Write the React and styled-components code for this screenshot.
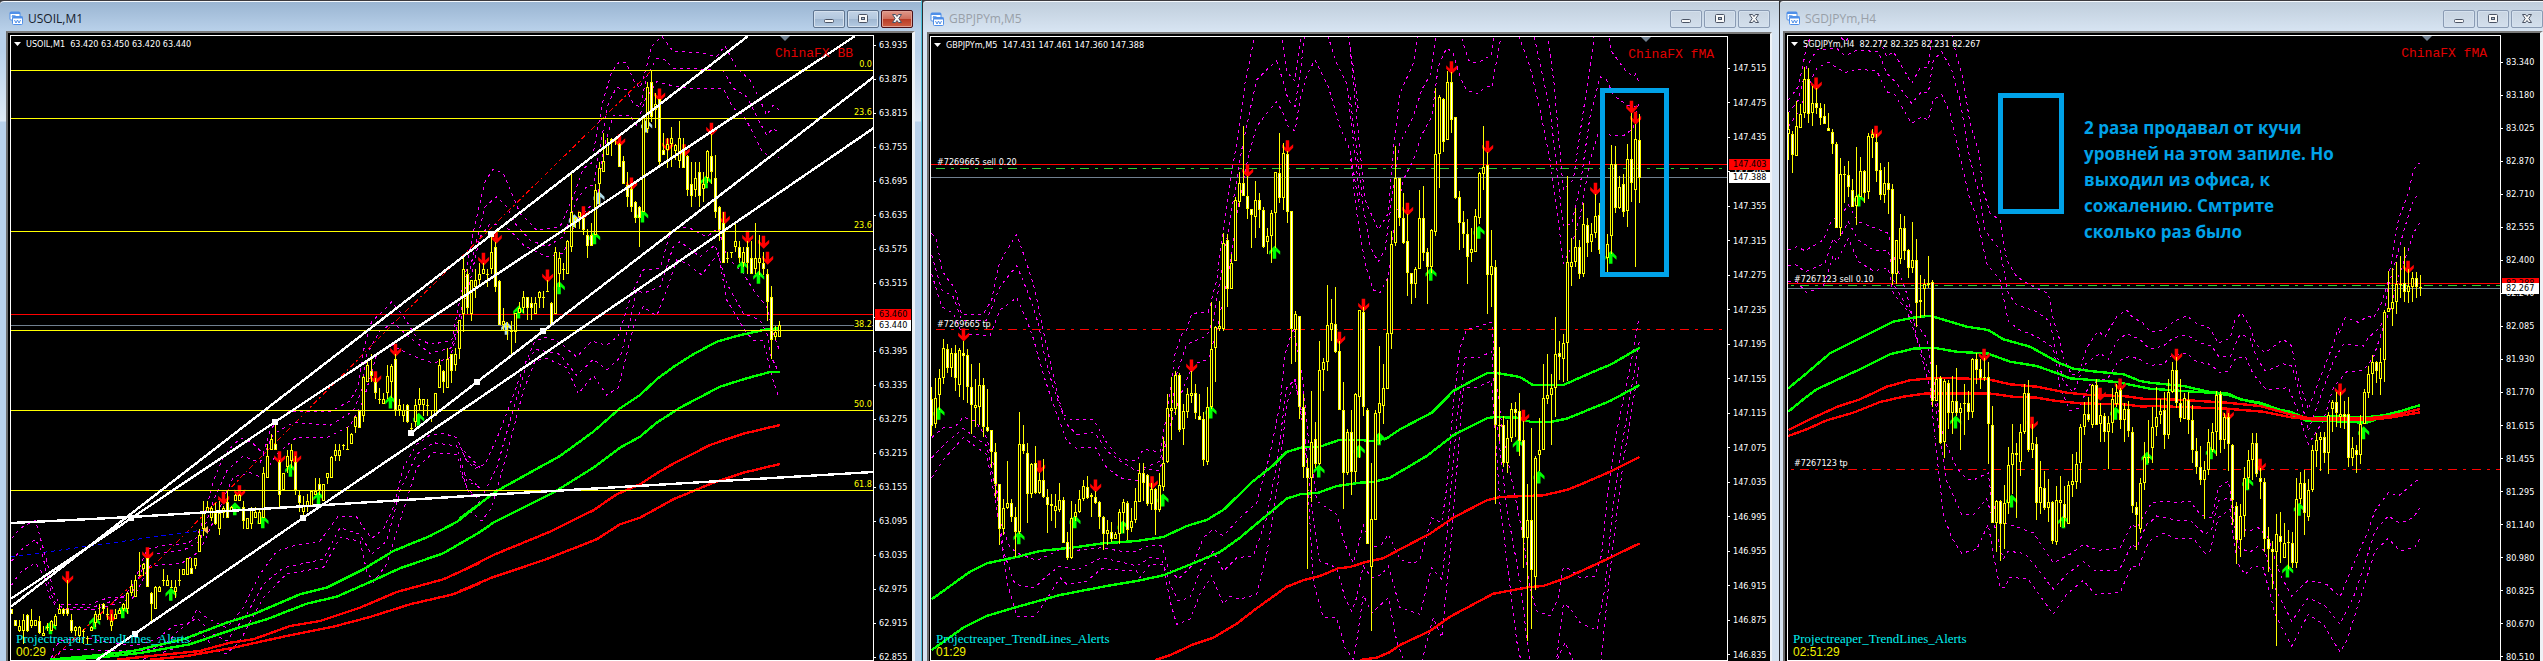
import React from "react";
import styled, { createGlobalStyle, css } from "styled-components";

const GlobalStyle = createGlobalStyle`
  * { box-sizing: border-box; }
  html, body { margin: 0; padding: 0; background: #3a3a3c; }
`;

const small = css`
  font-family: "DejaVu Sans Condensed", "DejaVu Sans", "Open Sans", sans-serif;
  font-size: 9px;
`;

const Desktop = styled.main`
  display: grid;
  grid-template-columns: 922fr 857fr 764fr;
  height: 100vh;
  overflow: hidden;
`;

const Window = styled.section`
  min-width: 0;
  min-height: 0;
  display: flex;
  flex-direction: column;
  border-top: 1px solid #3c3a3e;
  border-left: ${(p) => (p.$active ? "0" : "1px solid #2d2d31")};
  border-right: ${(p) => (p.$active ? "1px solid #4cc3dc" : "0")};
  border-top-left-radius: 4px;
  padding: 0 ${(p) => p.$right}px 0 ${(p) => p.$left}px;
  background: ${(p) =>
    p.$active
      ? "linear-gradient(#99b4d1 0, #b9d1ea 30px, #b9d1ea 50px, #dfeaf6 120px, #b9d1ea 121px)"
      : "linear-gradient(#bfcddb 0, #d7e4f2 30px)"};
  box-shadow: inset 0 1px 0 #f4f8fc;
`;

const TitleBar = styled.header`
  height: ${(p) => p.$height}px;
  flex: none;
  display: flex;
  align-items: center;
  gap: 4px;
  padding: 5px 0 0 3px;
`;

const Title = styled.h2`
  flex: 1;
  margin: 0;
  font: 400 12px/18px "Open Sans", "Noto Sans", sans-serif;
  color: ${(p) => (p.$active ? "#15202c" : "#99a0a8")};
`;

const Controls = styled.div`
  display: flex;
  gap: 2px;
  margin-right: ${(p) => p.$inset}px;
`;

const ControlButton = styled.button`
  width: 32px;
  height: 18px;
  padding: 0;
  display: grid;
  place-items: center;
  border: 1px solid ${(p) => (p.$danger ? "#4b1017" : p.$active ? "#5f7590" : "#8a9bb3")};
  border-radius: 2px;
  box-shadow: inset 0 0 0 1px ${(p) => (p.$danger ? "#e0a195" : "#d5e1ee")};
  background: ${(p) =>
    p.$danger
      ? "linear-gradient(#e0988a 0, #cf6f5d 48%, #b83a25 50%, #cd6045 100%)"
      : p.$active
        ? "linear-gradient(#c2d3e6 0, #b4c8de 48%, #9fb6d0 50%, #b5cce4 100%)"
        : "linear-gradient(#c8d4e1, #d3dfec)"};
`;

const Client = styled.div`
  flex: 1;
  min-height: 0;
  display: flex;
  background: #000;
  border-top: 2px solid #7a7a7a;
  border-left: 2px solid #6c6c6c;
  border-right: ${(p) => p.$edge}px solid #eef2f6;
  padding: 2px 0 0 ${(p) => p.$pad}px;
`;

const Plot = styled.div`
  position: relative;
  flex: 1;
  min-width: 0;
  border: 1px solid #fff;
  overflow: hidden;
`;

const Canvas = styled.svg`
  display: block;
  width: 100%;
  height: 100%;
`;

const Quote = styled.div`
  ${small}
  position: absolute;
  left: 3px;
  top: 2px;
  display: flex;
  align-items: center;
  gap: 5px;
  color: #fff;
  line-height: 12px;
  white-space: pre;
`;

const Indicator = styled.div`
  position: absolute;
  right: ${(p) => p.$right}px;
  top: 10px;
  font: 13px/16px "Liberation Mono", monospace;
  color: #e00000;
  white-space: pre;
`;

const Footer = styled.div`
  position: absolute;
  left: 5px;
  bottom: 2px;
  font: 13px/14px "Liberation Serif", serif;
  color: #00f0f0;
`;

const Countdown = styled.div`
  font: 12px/12px "Liberation Sans", sans-serif;
  color: #f0f000;
`;

const LineLabel = styled.div`
  ${small}
  position: absolute;
  top: ${(p) => p.$top}px;
  left: 6px;
  line-height: 12px;
  color: #fff;
`;

const FibLabel = styled.div`
  ${small}
  position: absolute;
  top: ${(p) => p.$top}px;
  right: 1px;
  line-height: 12px;
  background: #000;
  color: #ff0;
`;

const Axis = styled.div`
  position: relative;
  flex: none;
  width: ${(p) => p.$width}px;
  overflow: hidden;
`;

const Scale = styled.ol`
  ${small}
  list-style: none;
  margin: 0;
  padding: ${(p) => p.$top}px 0 ${(p) => p.$bottom}px;
  height: 100%;
  display: flex;
  flex-direction: column;
  justify-content: space-between;
  color: #fff;
`;

const Tick = styled.li`
  display: flex;
  align-items: center;
  gap: 3px;
  height: 8px;
  line-height: 8px;
  &::before {
    content: "";
    width: 2px;
    height: 1px;
    background: #fff;
  }
`;

const PriceTag = styled.div`
  ${small}
  position: absolute;
  top: ${(p) => p.$top}px;
  left: 1px;
  right: ${(p) => p.$right}px;
  height: 11px;
  line-height: 11px;
  padding-left: 4px;
  color: #000;
  background: ${(p) => p.$tone};
`;

const Note = styled.p`
  position: absolute;
  left: 296px;
  top: 79px;
  width: 270px;
  margin: 0;
  font: 700 17px/26px "Open Sans", "Noto Sans", sans-serif;
  color: #00a2e8;
  white-space: pre-line;
`;

/* Series are kept in thirds of a pixel; "@x,y" moves the origin (in pixels). */
function walk(text, visit) {
  let ox = 0;
  let oy = 0;
  text.trim().split(/\s+/).forEach((token) => {
    if (token[0] === "@") [ox, oy] = token.slice(1).split(",").map(Number);
    else visit(token, ox, oy);
  });
}

function points(text) {
  const out = [];
  walk(text, (t, ox, oy) => {
    const [x, y] = t.split(",").map(Number);
    out.push([ox + x / 3, oy + y / 3]);
  });
  return out;
}

const toLine = (text) => points(text).map((p) => p.map((v) => v.toFixed(1)).join(",")).join(" ");

/* Each run: origin, first x, then high,top,bottom,low per bar; "*" is a falling bar. */
function Candles({ runs }) {
  const wicks = [];
  const rims = [];
  const fills = [];
  runs.forEach(([ox, oy, start, text]) => {
    text.trim().split(/\s+/).forEach((token, i) => {
      if (token === "-") return;
      const x = ox + Math.floor((start + i * 12) / 3);
      const down = token.endsWith("*");
      const v = token.replace("*", "").split(",").map((n) => oy + Math.round(Number(n) / 3));
      const [h, t, b] = v;
      const l = v.length > 3 ? v[3] : b;
      const bh = Math.max(1, b - t);
      wicks.push(`M${x} ${h}h1V${Math.max(l, h + 1)}h-1z`);
      rims.push(`M${x - 1} ${t}h3v${bh}h-3z`);
      if (bh > 2) fills.push([`M${x} ${t + 1}h1v${bh - 2}h-1z`, down]);
    });
  });
  return (
    <g>
      <path d={wicks.join("") + rims.join("")} fill="#ff0" />
      <path d={fills.filter((f) => !f[1]).map((f) => f[0]).join("")} fill="#000" />
      <path d={fills.filter((f) => f[1]).map((f) => f[0]).join("")} fill="#fff" />
    </g>
  );
}

const ARROW = "M-2-6.5h3.5v7.5l4-3.5v3.5l-5.5 5.5l-5.5-5.5v-3.5l3.5 3.5z";

function Arrows({ at, color, up }) {
  return points(at).map(([x, y], i) => (
    <path key={i} d={ARROW} fill={color} transform={`translate(${x.toFixed(1)} ${y.toFixed(1)})${up ? " scale(1 -1)" : ""}`} />
  ));
}

const Bands = ({ list }) =>
  list.map((s, i) => (
    <polyline key={i} points={toLine(s)} fill="none" stroke="#f0f" strokeDasharray="3 4" shapeRendering="crispEdges" />
  ));

const Averages = ({ list }) =>
  list.map(([color, s], i) => (
    <polyline key={i} points={toLine(s)} fill="none" stroke={color} strokeWidth="2.4" shapeRendering="crispEdges" />
  ));

const Level = ({ y, color, dash }) => (
  <path d={`M0 ${y}.5H2543`} stroke={color} strokeDasharray={dash ? "9 6 3 6" : undefined} shapeRendering="crispEdges" />
);

const ShiftMark = ({ x, y }) => <path d={`M${x - 5} ${y}h10l-5 5z`} fill="#708090" />;

const OIL = {
  candles: [
    [0, 321, 35, `865,865,880* 898,898,915* 898,915,930,932 880,898,930,970 880,882,930,932* 865,898,915,920 898,898,915
      885,900,935,940* 915,935,945 905,918,920,930 898,900,930 880,885,915 848,865,880 860,865,880,885* 778,865,880,885*
      878,898,930,935* 915,918,930,945 915,918,945,965 925,930,932,968 945,950,952,970 915,918,930 870,878,905,918 850,880,898
      845,848,865,880* 860,880,882,898 880,900,915,930 865,880,895 860,868,880 845,850,865,870 813,815,863,880 778,795,815,825
      762,778,828 693,763,765 725,728,745,765 710,712,797* 813,815,848,905* 795,797,865 795,797,813 745,778,780,795
      762,778,795 778,798,800 778,797,813,830 745,778,780,795 745,745,762 710,712,762 710,740,758* 710,712,735,745
      625,643,693 540,575,625,645 540,557,573 555,560,592,600 545,575,610,612* 540,575,625,643 555,560,575,592
      510,543,590,592* 555,558,573 520,523,541 520,523,541 540,558,600,625* 590,592,625 558,560,608,625 558,573,590
      560,573,608 438,457,590 370,405,472 338,353,388 305,370,388* 418,422,522,557* 457,457,507 388,405,438,457
      370,388,420,440 405,422,507,522* 507,523,545,573* 525,555,573,590 520,541,557,573 508,510,558 472,510,523
      472,490,508,522* 488,490,541 455,457,472,490 405,407,472 368,388,405,420 370,388,405,420 370,372,374,388
      318,385,388 335,338,370 285,287,318,335 268,270,320* 165,167,285,302 115,133,183 98,150,165,183* 170,183,217,235*
      200,235,237,250 215,235,250 133,165,217,235 130,135,183,230 98,115,268,285* 235,252,268,285 250,268,285,302
      250,252,302,305* 305,320,322,335 235,252,302,318 200,235,252,270 235,235,252,285 235,252,254,285 270,285,287,302
      217,217,285 115,133,200 148,150,183,217* 82,115,202 98,100,150,185* 82,98,133,150 -3,-3,83,115`],
    [460, 0, 11, `773,808,943,995 808,823,925,943* 840,840,943,962 808,840,860,895 790,823,840,860 790,808,823
      808,823,825,860 700,757,808,823 725,740,860,875* 840,842,975* 925,962,975,992 965,978,980,1020 962,992,994,1063
      940,940,995,1030 905,925,940 873,890,925,940 890,892,925,960* 890,908,925,960* 890,908,943 873,875,895,925
      873,890,892,925 840,873,875 905,908,975* 740,757,943 757,773,823,860 790,808,810,840 720,722,823 518,637,740,757
      650,655,657,685 635,637,650,688 650,655,690,705* 688,705,738,773* 670,705,738* 552,570,705 485,503,552,620
      400,483,517 415,433,465 413,417,430,467 415,417,419,435 430,433,500* 467,483,553* 517,555,590,620* 550,568,620,637*
      603,605,655,670* 618,620,655,740* 345,350,637 245,262,388,400 210,247,350,365* 280,313,330,385 297,297,487,503*
      400,450,465* 415,433,450,503 380,415,433,500 433,436,452,480 362,415,483,503 415,450,503* 465,467,570,587*
      485,552,587,620* 485,535,570,590 487,517,587,620* 517,552,568,605 450,452,535,550 403,467,517,552* 465,535,637,655*
      618,620,690,722* 637,670,790* 757,773,775,790 757,757,759,775 670,722,740,755 722,740,773,790* 740,755,790,800
      722,740,790,823* 722,773,823* 670,773,808,823 705,773,790,825 757,790,808,825* 808,823,905,962* 857,890,1020,1078*
      978,995,1012,1020 962,975,1012`],
  ],
  bands: [
    `@0,321 35,652 60,622 106,598 118,640 132,690 148,750 158,810 180,850 270,850 330,828 370,828 400,790 440,685 500,672 560,668
     590,650 612,590 640,480 670,410 700,370 725,352 760,368 790,398 810,330 830,300 870,270 990,272 1050,240 1075,195 1090,90
     1115,0 1140,-20 1175,-58 1210,-15 1250,50 1290,70 1355,60 1375,-40 @460,0 15,830 35,720 55,630 75,545 100,507 130,520 155,580
     180,640 230,690 300,680 340,590 370,505 395,490 410,400 430,300 455,215 480,183 500,190 520,240 540,265 560,200 575,140
     605,108 640,155 720,157 770,170 795,137 830,205 870,240 900,300 920,345 940,315 957,330`,
    `@0,321 35,720 60,690 106,655 125,690 145,780 160,840 190,862 280,858 345,838 400,810 445,700 550,688 600,660 640,540 680,450
     730,405 780,425 820,340 880,305 990,313 1060,270 1085,210 1100,100 1140,30 1180,5 1230,50 1290,97 1355,80 1385,-40
     @460,0 25,830 50,720 75,620 110,590 140,620 165,670 210,720 260,740 310,710 350,600 380,560 400,555 420,440 445,310 470,262
     500,270 520,310 540,322 560,230 590,175 615,180 640,205 720,207 790,212 820,265 860,290 890,350 920,405 940,385 957,400`,
    `@0,321 35,792 60,755 106,725 130,760 150,830 175,865 280,865 345,850 400,830 450,735 545,727 600,690 650,580 700,468 750,455
     785,470 830,400 890,348 985,348 1050,315 1090,240 1130,100 1170,70 1240,105 1300,127 1350,110 1385,-10
     @460,0 10,930 40,800 60,710 90,672 120,675 150,690 190,735 260,770 310,760 350,660 390,620 410,610 430,450 460,345 510,345
     530,375 555,300 590,245 640,258 700,266 790,267 820,325 850,345 880,400 910,460 957,472`,
    `@0,321 155,1012 160,985 180,960 260,950 330,965 400,975 470,955 520,915 570,905 590,865 620,890 680,920 730,860 780,760
     830,690 880,675 960,660 1015,585 1070,588 1090,620 1115,652 1150,625 1180,560 1210,440 1250,370 1290,342 1330,337 1370,350
     1400,420 1440,440 @460,321 0,378 20,420 45,442 75,430 120,330 150,250 190,140 225,60 260,48 300,65 350,108 395,60 440,73
     475,45 @460,0 515,880 550,810 600,805 630,700 655,678 690,685 740,710 775,685 800,770 850,820 880,870 920,920 940,1000
     @460,321 957,85`,
    `@0,321 158,1015 190,985 430,990 490,975 540,925 590,890 640,940 680,960 740,880 790,790 850,740 970,715 1020,620 1080,640
     1115,700 1160,660 1200,510 1250,400 1300,365 1370,375 1400,480 1440,500 @460,321 0,450 30,520 70,520 110,440 150,300 200,130
     225,85 300,100 350,163 400,115 440,147 480,110 510,0 @460,0 530,870 550,880 600,860 640,740 660,725 720,770 765,735 800,850
     850,940 900,960 925,1010 @460,321 930,100 957,155`,
    `@0,321 430,1015 560,970 600,930 650,990 680,998 720,960 790,830 860,758 970,740 1020,650 1080,660 1100,750 1120,783 1160,730
     1200,600 1250,440 1300,395 1370,400 1400,500 1440,540 @460,321 30,570 65,600 95,560 140,400 190,210 225,120 260,112 320,140
     355,218 400,163 440,222 475,200 505,80 525,0 @460,0 550,920 590,948 620,870 650,780 680,790 725,825 775,760 800,900 860,1000
     880,1020 @460,321 910,60 940,180 957,230`,
  ],
  averages: [
    ["#0f0", `@0,321 150,1016 290,1003 400,990 550,955 680,905 760,880 900,820 980,800 1090,745 1180,690 1290,645 1370,603 1440,548
      @460,321 0,592 110,510 300,405 400,332 480,262 540,222 590,175 640,138 700,100 770,62 830,45 920,25 955,22`],
    ["#0f0", `@0,321 150,1018 290,1010 420,996 570,970 700,925 800,895 920,848 1010,827 1110,783 1200,742 1330,697 1440,633
      @460,321 100,605 280,515 400,440 480,380 540,347 590,305 660,260 780,197 860,172 930,153 960,153`],
    ["#f00", `@0,321 350,1016 500,1000 600,990 690,965 760,955 870,915 960,900 1080,860 1190,813 1330,775 1440,725
      @460,321 0,752 100,702 270,632 400,568 470,520 540,490 590,457 640,428 750,372 850,338 960,312`],
    ["#f00", `@0,321 450,1016 560,1005 700,980 850,947 1000,917 1110,888 1230,850 1360,820 1440,787
      @460,321 0,810 100,768 250,718 410,655 480,610 540,590 640,535 760,485 850,455 960,429`],
  ],
  sells: `@0,321 203,770 335,885 443,698 671,532 719,512 839,410 887,410 1127,170 1187,88 @460,0 71,778 109,712 263,828 371,638
    479,422 515,552 599,285 623,435 673,452 755,388 793,655 863,712 911,727 923,775`,
  buys: `@0,321 152,920 284,905 369,872 513,820 705,563 789,602 872,448 956,532 1172,243 1256,295 @460,0 176,936 298,863 404,713
    548,648 739,545 848,800 896,832`,
  hints: `@460,0 140,985 343,662 417,593 560,378`,
  handles: `@0,321 825,303 393,592 909,591 1233,336 1431,183 404,938 @460,0 92,703 249,992`,
  trends: [
    `@0,321 33,857 @460,0 864,108`,
    `@0,321 33,833 825,303 @460,0 1185,108`,
    `@0,321 290,1017 909,591 1440,230 @460,0 1240,385`,
    `@0,321 1233,336 1431,183 @460,0 1240,232`,
    `@0,321 33,606 393,588 1440,523 @460,321 1240,453`,
  ],
};

const GBP = {
  candles: [
    [920, 321, 35, `198,235,315,345* 172,230,310,322 145,172,222,268 53,80,172,188 70,83,140,155* 80,97,140,168 73,97,170,210*
      80,87,193,228 60,97,104,237* 83,102,198,247* 128,198,252,338* 175,253,260,318 125,193,257,311 170,193,317,347*
      204,317,330,333* 328,328,393,440* 367,393,490,530* 488,490,625,672* 533,560,625,643 420,545,560,565 533,545,588,603*
      558,588,632,707* 273,370,632,640 311,370,390,400* 367,397,520,605* 425,428,520,530 375,427,517,520* 455,478,517,520
      415,478,527,530* 503,527,553,635* 518,548,556,600 518,555,570,620 485,538,568,573 528,538,665* 632,663,712,718*
      540,592,712,714 550,572,588,600 507,535,572,575 478,495,535,540 465,497,530,535* 515,523,528,588 510,528,545,550*
      541,543,588,625* 585,588,640,687* 598,628,640,672 603,632,655,663* 633,638,655 565,572,640,670 533,543,577,635
      541,545,628,657* 560,600,622,633 500,541,598,605 425,455,543 427,455,485,540* 460,463,548,556* 485,503,550,568
      500,503,567,642* 455,492,568,572 348,425,497,510 218,262,422,425 168,262,270,357 150,163,263,283 155,163,328,332*
      250,270,325,373 202,220,272,290 150,215,225,247 190,217,277,293* 218,285,298* 273,293,416,435* 198,257,422,433
      -58,83,257,263 15,17,82,182 -60,15,25,30 -263,-235,25,30 -260,-243,-95,-43* -200,-173,-95 -372,-363,-180
      -448,-413,-358,-343 -585,-413,-375* -435,-375,-337,-307* -337,-337,-317,-218* -420,-363,-313,-250
      -385,-363,-333,-280* -342,-333,-223,-218* -278,-255,-237,-202 -333,-325,-255,-175 -448,-446,-325,-220
      -563,-443,-370,-355* -535,-503,-370,-333 -510,-501,-328,-295* -330,-330,25,130* -30,-20,28,122 -15,-15,257,293*
      218,257,437,470* 412,440,470,743* 210,362,470,543 303,353,428,440* 60,148,428,432 112,122,148,210 -108,12,122,150
      -67,5,28,60 -103,10,92,95* 60,90,268* 183,268,455,565* 325,333,457,462 268,333,452,522* 217,220,452,483`],
    [1350, 321, 29, `-33,-33,227,412 -43,-28,258,285* 262,268,670* 425,595,737,930 268,277,598 75,247,275,370 128,202,255,308
      -125,37,205 -270,-230,40,83 -525,-430,-233,-225 -430,-428,-310,-285* -385,-308,-235,-232* -320,-240,-143,-75*
      -145,-143,-112,-50* -163,-155,-110,-70 -393,-308,-155 -405,-310,-205,-180* -220,-207,-163,-50* -275,-273,-163,-145
      -698,-500,-268,-255 -678,-672,-500,-398 -668,-665,-537,-508* -750,-717,-542 -748,-717,-603,-565* -612,-611,-370,-365*
      -390,-372,-293,-213* -330,-297,-260,-220* -305,-260,-193,-110* -280,-217,-203,-177 -335,-315,-208 -447,-445,-310,-290
      -585,-462,-440,-393 -507,-468,-137,-20* -272,-165,-137,-43 -183,-162,313,550* 78,313,315,360 285,313,425,437*
      298,352,425,455 247,265,352,363 243,265,275,347* 217,270,360,405* 300,358,650,742* 490,597,652,960 320,597,748,923*
      405,410,767,806 290,388,403,450 130,230,388 98,223,233,250 158,200,223,372 -13,98,200,287 60,95,108,177*
      40,65,115,182 -435,-178,65,180 -248,-178,-163,-105 -340,-222,-177,-163 -243,-223,-140,-125* -353,-290,-140,-133
      -310,-287,-235,-193* -295,-260,-237,-208 -380,-315,-265,-248 -353,-317,-212,-200* - -260,-230,-190,-148
      -527,-470,-255,-200 -525,-470,-340,-325* -435,-403,-338,-337 -440,-410,-327,-313* -530,-485,-330,-282
      -625,-487,-415,-358* -590,-545,-392,-163 -620,-542,-430,-355*`],
  ],
  bands: [
    `@920,0 35,700 50,720 65,810 85,840 105,865 125,945 190,942 215,900 235,800 255,760 290,703 320,790 345,870 365,970
     @920,321 390,120 415,230 430,280 455,297 520,295 560,365 600,415 650,420 670,385 720,393 740,280 765,100 785,40
     @920,0 800,990 815,940 865,937 890,840 915,650 935,520 960,370 975,250 1003,115 1006,90 1082,90 1100,215 1125,243 1145,90
     1282,90 1300,200 1315,330`,
    `@1350,0 0,140 25,400 45,600 85,690 115,640 130,450 150,280 190,190 207,90 590,90 612,250 640,570 670,540 690,400 720,200
     735,90 772,90 785,155 825,210 850,230 857,222 868,250`,
    `@920,0 35,765 65,870 100,890 125,960 200,960 240,860 290,797 325,880 355,970 @920,321 375,110 400,200 440,310 470,340
     525,335 560,390 600,420 650,450 720,420 740,340 770,160 800,70 860,45 @920,0 880,960 915,750 940,600 965,450 990,330
     1010,240 1050,200 1070,183 1085,230 1105,300 1125,320 1140,220 1157,90 1218,90 1250,190 1280,250 1300,420 1320,600`,
    `@1350,0 0,290 20,450 40,620 60,740 85,785 105,750 125,600 150,430 190,350 215,270 240,225 262,90 328,90 355,180 380,190
     425,165 434,90 548,90 600,330 620,500 640,680 665,670 690,560 720,350 750,230 770,240 790,285 830,315 868,320`,
    `@920,0 35,822 65,920 100,940 125,1000 210,1008 240,930 290,893 320,960 340,1015 @920,321 370,160 400,250 440,360 470,382
     525,377 560,440 600,470 650,480 670,445 720,448 745,330 790,200 820,130 865,115 @920,0 890,990 925,820 955,620 985,470
     1010,380 1040,340 1070,305 1090,340 1105,380 1125,393 1140,300 1160,225 1185,180 1225,260 1260,380 1290,450 1318,620`,
    `@1350,0 0,455 20,640 45,790 70,870 90,878 115,830 135,660 160,540 190,480 215,405 245,350 265,200 290,143 310,160 330,230
     350,270 380,282 410,258 425,262 440,180 457,90 500,90 540,200 570,330 600,480 620,620 640,790 660,750 690,650 720,480
     745,400 780,405 820,408 850,385 868,300`,
    `@920,321 35,350 70,320 105,318 130,288 165,300 200,350 225,450 240,600 270,680 300,700 350,718 380,705 430,680 470,688
     545,680 600,690 650,690 690,672 725,675 745,740 775,775 820,730 850,650 880,625 910,645 960,590 1010,545 1050,400 1080,250
     1095,100 1120,20 1145,150 1165,350 1190,540 1250,580 1275,670 1300,725 @1350,321 20,690 40,612 65,680 95,670 115,640
     150,715 190,728 210,715 245,590 275,605 290,500 310,250 330,80 350,25 390,15 425,3 435,150 460,350 490,500 520,650 540,800
     560,870 600,885 625,830 640,740 660,745 690,770 735,765 755,700 775,500 800,330 830,190 855,60 865,0`,
    `@920,321 35,410 75,368 130,322 200,375 230,520 250,690 285,790 345,800 380,765 420,735 470,748 545,710 610,725 650,735
     690,710 725,715 750,790 775,840 810,830 840,750 880,690 910,750 950,710 1000,705 1040,590 1070,430 1100,200 1125,175
     1150,300 1180,600 1200,720 1250,740 1275,830 1295,870 @1350,321 20,830 40,735 65,770 95,760 115,735 150,860 210,880
     245,740 275,775 290,650 320,300 345,110 390,108 425,92 440,300 470,560 510,780 540,1030 618,1030 640,850 660,860 690,905
     740,928 765,800 790,550 820,350 868,60`,
    `@920,321 35,470 75,410 130,350 200,400 230,560 260,780 290,885 345,885 380,835 420,770 440,790 500,780 545,743 650,750
     660,770 690,730 730,730 750,840 770,910 810,895 840,820 875,765 910,850 930,825 960,835 1010,820 1040,700 1075,480
     1100,250 1125,175 1155,350 1180,780 1210,890 1250,890 1275,980 1300,1015 @1350,321 20,960 40,822 65,875 115,830 140,960
     165,1030 213,1030 250,890 275,950 300,700 340,200 380,198 425,180 450,550 500,960 515,1030 615,1030 645,965 675,1030
     752,1030 780,750 820,420 868,130`,
  ],
  averages: [
    ["#0f0", `@920,321 35,835 100,788 150,752 200,727 290,708 360,690 470,678 550,667 650,660 730,648 800,615 860,597 910,567
      1000,480 1060,433 1100,393 1150,378 1200,377 1255,358 1320,357 @1350,321 70,360 110,352 150,325 245,275 310,210 380,172
      415,155 435,155 510,168 550,193 640,192 740,148 780,132 869,80`],
    ["#0f0", `@920,321 35,987 130,920 200,885 290,858 420,822 560,795 650,780 730,763 820,727 900,693 960,650 1040,583 1100,533
      1140,520 1195,515 1250,495 1320,485 @1350,321 70,483 120,470 230,405 310,343 410,292 435,288 500,290 540,302 600,303
      650,293 780,240 869,192`],
    ["#f00", `@920,321 705,1017 750,1003 820,970 880,950 950,908 1010,862 1100,797 1150,778 1200,765 1255,742 1290,738
      @1350,321 50,722 100,712 150,685 240,638 310,590 410,538 450,528 580,523 650,507 700,487 780,452 869,408`],
    ["#f00", `@1350,321 30,1017 80,1010 120,993 150,972 240,930 300,887 430,818 540,798 580,795 650,770 770,715 869,667`],
  ],
  sells: `@920,321 131,42 359,438 527,495 697,485 815,135 1259,52 @920,0 983,513 1103,440 @1350,0 41,916 173,628 305,203 413,442
    737,568 845,322 857,355 @1350,321 521,286`,
  buys: `@920,321 57,277 297,650 465,602 609,618 729,537 873,273 1197,450 1318,390 @920,0 1064,757 @1350,0 243,823 387,697
    783,772 @1350,321 88,353 505,373 567,468`,
};

const SGD = {
  candles: [
    [1770, 321, 55, `-628,-575,-560,-483 -570,-562,-497,-445* -660,-585,-495 -650,-622,-580 -762,-725,-625,-608
      -758,-725,-622,-593* -705,-655,-623,-585 -700,-655,-638,-620* -653,-638,-610,-587* -650,-615,-590* -623,-580,-570*
      -577,-568,-530,-502* -537,-530,-280* -490,-440,-280,-255 -465,-442,-437,-355 -480,-437,-403,-373* -425,-392,-343*
      -522,-375,-345,-288 -492,-450,-373 -453,-451,-385,-355* -563,-555,-387,-365 -575,-560,-550,-490 -560,-537,-450,-418*
      -473,-452,-378,-363* -462,-413,-378,-355 -478,-413,-393,-320* -410,-395,-140,-107* -243,-242,-140,-110
      -320,-278,-187,-172 -315,-278,-210,-182* -217,-213,-160,-130* -297,-183,-160,-145 -245,-183,-55,18* -137,-63,-58,-8
      -127,-112,-95,-15 -195,-113,-108,-100 -122,-117,240,257* 133,175,240 165,172,365,370* 175,180,363,410
      178,185,277,325* 165,240,277,338 142,240,277,285* 245,260,275,388 190,245,250,343 210,247,272,297* 112,115,273,292
      97,115,147,190* 115,145,170,205* 112,167,172,180 123,167,310,428* 255,312,607* 538,540,607,692 538,540,610,720*
      492,545,610,685 378,433,545,580 310,395,433,520 367,397,402,590* 310,332,422,465 190,217,332,340 178,217,387,392*
      310,367,387,410 347,368,547,598* 420,497,547,580 450,500,562,567* 475,542,562,602 541,542,660,668* 495,538,663,672
      465,538,545,617 495,548,590,617* 480,493,610 400,480,492,527 392,428,482,503 308,317,425,487 243,280,317,342
      228,280,298,302* 188,193,313,320 175,193,311* 245,283,310,362 275,286,333,362* 285,307,333,443 202,235,307,337
      190,212,250,258 202,208,297,325* 245,265,298,362 240,265,330,347* 318,333,555,575* 543,558,583,687* 470,485,625,635
      363,408,485,508 298,408,412,425 258,317,382,425`],
    [2150, 321, 19, `198,287,317,345 235,270,283,310 213,268,343,383* 173,212,343,355 123,148,212,217 108,148,247,260*
      173,247,292,302* 215,230,293 212,238,297,340* 252,297,387,425* 352,390,438,460* 375,438,478,492* 420,448,478,593
      325,363,448,463 305,332,388,392 210,223,332,405 210,220,357,395* 275,288,357,385 275,288,370,450* 370,373,538,613*
      543,555,658,730* 548,586,658,707 438,470,586,648 388,417,470,505 335,365,417,478 335,365,460,467* 440,472,482,533*
      470,482,653,693* 617,653,685,753* 660,685,692,805* 580,640,692,975 573,645,662,725* 605,665,710 628,663,665,745
      632,665,725,740* 470,535,725,740 453,487,535,548 447,487,577,642* 475,508,587,600 372,388,508,513 335,358,390,438
      333,348,358,450 333,348,395,425* 273,283,395,458 237,243,265,333 212,243,277,317* 213,280,287,322 240,280,287,325*
      227,280,412,437* 347,380,412,435 372,388,403,455* 282,310,403,428 203,213,310 135,160,215,230 102,123,160,222
      120,123,150,187* 80,122,175,223 -33,-28,118,182 -150,-38,-28 -160,-57,-37,15 -177,-110,-57,-20 -195,-110,-108,-68
      -222,-115,-88,-57* -155,-105,-88,-53 -148,-130,-103,-57 -148,-130,-103,-70* -138,-102,-98,-75`],
  ],
  bands: [
    `@1770,0 55,300 85,260 100,190 110,135 122,112 140,90 190,90 225,125 240,108 280,90 320,100 350,170 370,155 425,250 450,205
     475,200 490,90 543,90 560,170 580,240 600,370 625,450 640,570 660,640 690,660 710,780 740,830 790,860 835,880 850,960
     868,1015 @1770,321 880,110 905,162 925,160 950,80 985,30 1005,48 1020,20 @1770,0 1040,950 1070,930 1090,955 1115,965
     1140,995 @2150,0 0,995 40,990 75,962 110,948 140,970 180,985 205,1030 240,1015 255,960 275,938 300,980 315,1030
     @2150,321 345,95 400,55 425,75 440,160 475,265 510,170 550,70 565,20 @2150,0 568,1000 585,953 625,967 655,948 670,955
     690,920 710,860 725,780 745,660 775,580 790,510 808,490`,
    `@1770,0 55,340 85,300 110,200 140,150 200,145 225,168 260,150 325,155 350,220 380,250 425,310 455,275 475,280 490,180
     515,155 545,210 570,300 600,480 630,590 645,690 690,750 715,880 740,915 800,935 840,965 855,1040 @1770,321 880,180 910,215
     945,130 990,97 1015,115 1040,60 1070,38 1110,55 @2150,321 0,85 40,75 70,50 110,42 150,65 185,75 205,105 240,108 270,40
     300,50 320,110 345,150 370,142 400,128 425,135 445,200 475,330 510,230 550,120 580,70 640,75 655,50 690,20 @2150,0 700,960
     715,860 740,770 765,680 790,600 808,580`,
    `@1770,0 55,380 90,330 115,260 140,205 175,187 225,218 260,208 320,212 350,275 375,285 425,370 455,350 475,360 490,300
     515,283 540,340 570,470 600,600 620,650 650,790 690,840 715,965 750,990 800,1010 @1770,321 850,80 870,200 900,270 925,262
     960,190 1015,170 1045,120 1080,105 1115,118 @2150,321 0,133 40,130 65,103 110,97 140,122 180,130 210,155 235,150 255,115
     285,105 310,160 350,207 415,200 440,260 475,370 520,300 550,200 590,152 640,148 670,110 700,20 @2150,0 720,930 745,830
     775,750 790,700 808,670`,
    `@1770,0 55,750 80,740 105,752 160,720 185,660 210,650 235,615 265,665 310,682 355,700 380,800 410,880 430,960
     @1770,321 470,50 495,200 520,350 560,440 590,475 615,475 655,455 665,540 690,600 760,625 790,635 850,725 900,700 940,670
     985,688 1050,680 1085,610 1100,620 1130,570 @2150,321 5,545 40,540 80,545 120,540 150,580 185,590 205,500 235,480 255,590
     290,632 325,620 355,650 390,760 425,825 475,778 530,790 570,828 610,730 650,640 675,570 715,515 745,525 775,500 805,475`,
    `@1770,0 55,797 75,792 105,815 165,790 190,715 200,730 235,665 265,720 310,750 355,750 375,860 430,950 @1770,321 440,50
     490,190 510,350 530,480 575,580 610,582 650,533 670,600 700,715 715,690 765,698 800,740 850,805 890,760 940,722 975,750
     1040,748 1055,735 1085,670 1100,680 1130,610 @2150,321 5,600 20,585 80,598 120,598 165,640 185,625 205,540 240,530 265,680
     300,693 325,675 345,690 375,800 425,900 475,830 525,855 570,910 610,830 650,710 675,630 715,585 750,607 790,590 808,562`,
    `@1770,0 55,845 80,845 110,878 160,860 190,765 200,785 235,715 265,785 310,812 355,805 370,880 410,930 435,1000
     @1770,321 480,200 500,400 520,580 545,650 575,697 620,685 655,610 670,700 690,800 705,800 720,768 775,775 850,880 890,820
     940,778 975,820 1050,815 1085,735 1105,740 1135,665 @2150,321 5,655 40,637 75,652 130,652 165,697 180,690 205,590 240,565
     260,720 285,762 310,733 340,740 375,880 425,975 475,880 520,910 570,993 590,960 650,770 675,690 715,652 750,690 795,678
     808,655`,
  ],
  averages: [
    ["#0f0", `@1770,321 55,202 100,165 180,97 290,42 370,2 @1770,0 430,953 480,947 590,980 655,990 700,1018 @1770,321 780,77
      870,127 910,143 960,150 1060,160 1110,180 @2150,321 0,185 100,195 180,213 235,218 270,235 330,245 400,270 470,300
      540,300 600,303 650,305 700,287 760,268 811,252`],
    ["#0f0", `@1770,321 55,272 100,235 140,205 200,177 280,140 360,100 430,83 490,80 560,92 655,98 720,122 800,135 870,160
      900,172 1040,183 1100,195 @2150,321 0,203 100,210 180,215 235,222 280,237 340,250 380,265 420,272 470,292 560,285
      640,290 700,283 760,268 811,252`],
    ["#f00", `@1770,321 55,327 130,290 200,258 270,235 350,197 420,178 500,170 655,175 720,190 800,197 890,215 960,222 1060,225
      1120,233 @2150,321 0,233 100,237 230,245 330,255 420,280 470,290 650,292 720,285 811,264`],
    ["#f00", `@1770,321 55,345 110,325 170,298 250,275 330,243 400,227 470,217 655,217 730,227 800,230 860,240 930,247 1060,250
      1120,257 @2150,321 0,255 100,258 230,263 340,272 430,290 480,295 650,297 720,290 811,274`],
  ],
  sells: `@1770,0 139,252 319,397 @1770,321 643,103 787,307 991,220 1051,192 @2150,321 80,103 571,207 235,280 331,433
    @2150,0 775,802`,
  buys: `@1770,0 267,600 @1770,321 557,303 725,540 881,602 1037,277 1131,412 @2150,321 184,395 293,488 413,750 448,565 641,335`,
};

function Study({ data }) {
  return (
    <>
      <Bands list={data.bands} />
      <Averages list={data.averages} />
      <Arrows at={data.sells} color="#f00" />
      <Arrows at={data.buys} color="#0f0" up />
      {data.hints && <Arrows at={data.hints} color="#add8e6" up />}
      <Candles runs={data.candles} />
    </>
  );
}

const WindowIcon = () => (
  <svg width="15" height="15" viewBox="0 0 15 15" aria-hidden="true">
    <rect x="1" y="1" width="10" height="8" rx="1" fill="#fff" stroke="#4f8fe8" />
    <path d="M1 2h10" stroke="#4f8fe8" strokeWidth="2" />
    <path d="M3 6l1-2 1 3 1-3" fill="none" stroke="#4f8fe8" />
    <rect x="3.5" y="5.5" width="10" height="8" rx="1" fill="#fff" stroke="#4f8fe8" />
    <path d="M3.5 6.5h10" stroke="#4f8fe8" strokeWidth="2" />
    <path d="M5.5 9l1.5 3 1.5-3 1.5 3 1.5-3" fill="none" stroke="#4f8fe8" />
  </svg>
);

const glyph = { stroke: "#4a5364", fill: "#f8f8f8" };

function WindowControls({ active, inset }) {
  return (
    <Controls $inset={inset}>
      <ControlButton $active={active} aria-label="Minimize">
        <svg width="12" height="12" viewBox="0 0 12 12">
          <rect x="1.5" y="6.5" width="9" height="3" rx="1" {...glyph} />
        </svg>
      </ControlButton>
      <ControlButton $active={active} aria-label="Maximize">
        <svg width="12" height="12" viewBox="0 0 12 12">
          <rect x="1.5" y="1.5" width="9" height="8" rx="1" {...glyph} />
          <rect x="4.5" y="4.5" width="3" height="2" fill="#aebdd0" stroke="#4a5364" />
        </svg>
      </ControlButton>
      <ControlButton $active={active} $danger={active} aria-label="Close">
        <svg width="12" height="12" viewBox="0 0 12 12">
          <path d="M1.5 1.5h3L6 3.5l1.5-2h3L7.800 5.5l2.700 4h-3L6 7.5l-1.5 2h-3l2.700-4z" {...glyph} />
        </svg>
      </ControlButton>
    </Controls>
  );
}

function ChartWindow({ title, quote, indicator, indicatorRight = 13, countdown, active, box, viewBox, scale, tags, overlay, children }) {
  return (
    <Window $active={active} $left={box.left} $right={box.right}>
      <TitleBar $height={box.header}>
        <WindowIcon />
        <Title $active={active}>{title}</Title>
        <WindowControls active={active} inset={box.inset} />
      </TitleBar>
      <Client $edge={box.edge} $pad={box.pad}>
        <Plot>
          <Canvas viewBox={viewBox} preserveAspectRatio="none" role="img" aria-label={title}>
            {children}
          </Canvas>
          <Quote>
            <svg width="7" height="4" viewBox="0 0 7 4" aria-hidden="true">
              <path d="M0 0h7L3.5 4z" fill="#fff" />
            </svg>
            {quote}
          </Quote>
          <Indicator $right={indicatorRight}>{indicator}</Indicator>
          {overlay}
          <Footer>
            Projectreaper_TrendLines_Alerts
            <Countdown>{countdown}</Countdown>
          </Footer>
        </Plot>
        <Axis $width={box.axis}>
          <Scale $top={scale.top} $bottom={scale.bottom}>
            {scale.prices.map((p) => (
              <Tick key={p}>{p}</Tick>
            ))}
          </Scale>
          {tags.map(([text, top, tone]) => (
            <PriceTag key={text} $top={top} $tone={tone} $right={box.tagRight}>
              {text}
            </PriceTag>
          ))}
        </Axis>
      </Client>
    </Window>
  );
}

const OIL_PRICES = "63.935 63.875 63.815 63.755 63.695 63.635 63.575 63.515 63.455 63.395 63.335 63.275 63.215 63.155 63.095 63.035 62.975 62.915 62.855".split(" ");
const GBP_PRICES = "147.515 147.475 147.435 147.395 147.355 147.315 147.275 147.235 147.195 147.155 147.115 147.075 147.035 146.995 146.955 146.915 146.875 146.835".split(" ");
const SGD_PRICES = "83.340 83.180 83.025 82.870 82.710 82.555 82.400 82.240 82.085 81.930 81.770 81.615 81.455 81.295 81.140 80.980 80.825 80.670 80.510".split(" ");

const FIBS = [["0.0", 70], ["23.6", 118], ["23.6", 231], ["38.2", 330], ["50.0", 410], ["61.8", 490]];

export default function App() {
  return (
    <>
      <GlobalStyle />
      <Desktop>
        <ChartWindow
          active
          title="USOIL,M1"
          quote={"USOIL,M1  63.420 63.450 63.420 63.440"}
          indicator="ChinaFX BB"
          indicatorRight={20}
          countdown="00:29"
          box={{ left: 6, right: 6, header: 30, inset: 2, edge: 3, pad: 2, axis: 38, tagRight: 1 }}
          viewBox="11 36 862 624"
          scale={{ top: 6, bottom: 0, prices: OIL_PRICES }}
          tags={[["63.460", 274, "#f00"], ["63.440", 285, "#fff"]]}
          overlay={FIBS.map(([text, y]) => (
            <FibLabel key={y} $top={y - 48}>{text}</FibLabel>
          ))}
        >
          <Level y={314} color="#f00" />
          <Level y={325} color="#708090" />
          <path d="M53 658L160 559L393 324L652 70" fill="none" stroke="#f00" strokeDasharray="5 3 2 3" shapeRendering="crispEdges" />
          <path d="M11 557L203 530" stroke="#00f" strokeDasharray="4 4" shapeRendering="crispEdges" />
          <Study data={OIL} />
          {FIBS.map(([, y]) => (
            <Level key={y} y={y} color="#ff0" />
          ))}
          {OIL.trends.map((t) => (
            <polyline key={t} points={toLine(t)} fill="none" stroke="#fff" strokeWidth="2.4" shapeRendering="crispEdges" />
          ))}
          {points(OIL.handles).map(([x, y]) => (
            <rect key={x} x={Math.round(x) - 3} y={Math.round(y) - 3} width="6" height="6" fill="#fff" />
          ))}
          <path d="M208 526l-5 4 5 4z" fill="#ffb84d" />
          <ShiftMark x={785} y={36} />
        </ChartWindow>

        <ChartWindow
          title="GBPJPYm,M5"
          quote={"GBPJPYm,M5  147.431 147.461 147.360 147.388"}
          indicator="ChinaFX fMA"
          countdown="01:29"
          box={{ left: 4, right: 7, header: 31, inset: 2, edge: 2, pad: 1, axis: 42, tagRight: 0 }}
          viewBox="931 37 796 623"
          scale={{ top: 28, bottom: 2, prices: GBP_PRICES }}
          tags={[["147.403", 123, "#f00"], ["147.388", 136, "#fff"]]}
          overlay={
            <>
              <LineLabel $top={119}>#7269665 sell 0.20</LineLabel>
              <LineLabel $top={281}>#7269665 tp</LineLabel>
            </>
          }
        >
          <Level y={164} color="#f00" />
          <Level y={168} color="#32cd32" dash />
          <Level y={177} color="#708090" />
          <Level y={329} color="#f00" dash />
          <Study data={GBP} />
          <rect x="1602.5" y="90.5" width="64" height="184" fill="none" stroke="#00a2e8" strokeWidth="5" />
          <ShiftMark x={1646} y={37} />
        </ChartWindow>

        <ChartWindow
          title="SGDJPYm,H4"
          quote={"SGDJPYm,H4  82.272 82.325 82.231 82.267"}
          indicator="ChinaFX fMA"
          countdown="02:51:29"
          box={{ left: 3, right: 0, header: 30, inset: 0, edge: 3, pad: 2, axis: 39, tagRight: 1 }}
          viewBox="1788 36 712 624"
          scale={{ top: 23, bottom: 0, prices: SGD_PRICES }}
          tags={[["82.288", 243, "#f00"], ["82.267", 248, "#fff"]]}
          overlay={
            <>
              <LineLabel $top={237}>#7267123 sell 0.10</LineLabel>
              <LineLabel $top={421}>#7267123 tp</LineLabel>
              <Note>
                {"2 раза продавал от кучи\nуровней на этом запиле. Но\nвыходил из офиса, к\nсожалению. Смтрите\nсколько раз было"}
              </Note>
            </>
          }
        >
          <Level y={283} color="#f00" />
          <Level y={285} color="#32cd32" dash />
          <Level y={288} color="#708090" />
          <Level y={469} color="#f00" dash />
          <Study data={SGD} />
          <rect x="2000.5" y="95.5" width="61" height="116" fill="none" stroke="#00a2e8" strokeWidth="5" />
          <ShiftMark x={2427} y={36} />
        </ChartWindow>
      </Desktop>
    </>
  );
}
